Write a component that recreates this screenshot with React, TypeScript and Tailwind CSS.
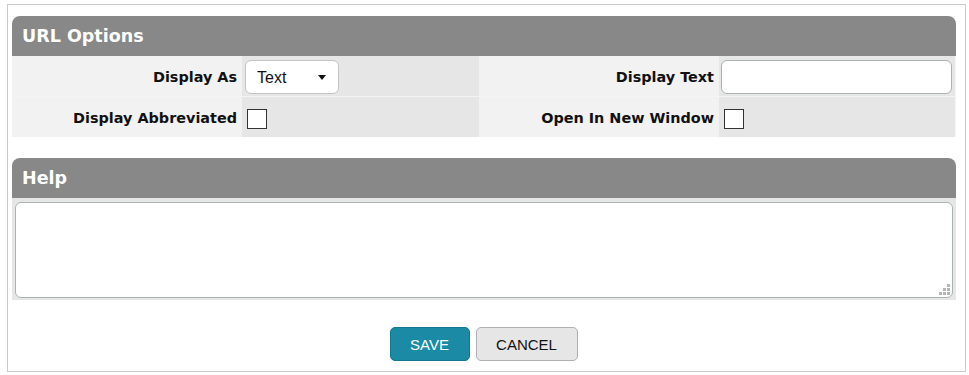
import React, { useState } from 'react';

const labelCls =
  "flex items-center justify-end pr-[5px] pt-[3px] bg-[#f2f2f2] text-[14.4px] font-bold text-[#111] [font-family:'DejaVu_Sans',Verdana,sans-serif]";
const valueCls = 'flex items-center bg-[#e6e6e6]';

const Checkbox: React.FC<{ checked: boolean; onToggle: () => void }> = ({ checked, onToggle }) => (
  <button
    type="button"
    onClick={onToggle}
    className="ml-[5px] mt-[3px] w-[20px] h-[20px] border border-[#333] bg-white flex items-center justify-center text-[12px] leading-none"
  >
    {checked ? '✓' : ''}
  </button>
);

const PanelHeader: React.FC<{ title: string }> = ({ title }) => (
  <div className="h-[40px] rounded-t-[8px] bg-[#888888] flex items-center px-[10px] text-white text-[17.5px] font-bold [font-family:'DejaVu_Sans',Verdana,sans-serif]">
    {title}
  </div>
);

const App: React.FC = () => {
  const [displayAs, setDisplayAs] = useState('Text');
  const [displayText, setDisplayText] = useState('');
  const [abbrev, setAbbrev] = useState(false);
  const [newWindow, setNewWindow] = useState(false);
  const [help, setHelp] = useState('');

  return (
    <div className="ml-[7px] mt-[4px] w-[959px] h-[368px] border border-[#cccccc] bg-white pl-[4px] pr-[9px] pt-[11px] [font-family:'Liberation_Sans',Arial,sans-serif]">
      {/* URL Options */}
      <div>
        <PanelHeader title="URL Options" />
        <div className="grid grid-cols-[230px_237px_240px_236px] gap-y-[1px] bg-[#f4f4f4]">
          <div className={`${labelCls} h-[40px]`}>Display As</div>
          <div className={`${valueCls} h-[40px] pl-[3px]`}>
            <div className="relative mt-[1px]">
              <select
                value={displayAs}
                onChange={(e) => setDisplayAs(e.target.value)}
                className="appearance-none w-[94px] h-[34px] rounded-[6px] border border-[#c4c4c4] bg-white pl-[11px] pt-[3px] text-[16px] text-[#111] outline-none"
              >
                <option>Text</option>
                <option>Link</option>
              </select>
              <svg className="absolute right-[13px] top-[15px] pointer-events-none" width="8" height="5" viewBox="0 0 8 5">
                <path d="M0 0 H8 L4 5 Z" fill="#111" />
              </svg>
            </div>
          </div>
          <div className={`${labelCls} h-[40px]`}>Display Text</div>
          <div className={`${valueCls} h-[40px] pl-[2px]`}>
            <input
              value={displayText}
              onChange={(e) => setDisplayText(e.target.value)}
              className="mt-[1px] w-[231px] h-[34px] rounded-[6px] border border-[#aab3b3] bg-white px-[6px] text-[15px] outline-none"
            />
          </div>

          <div className={`${labelCls} h-[40px]`}>Display Abbreviated</div>
          <div className={`${valueCls} h-[40px]`}>
            <Checkbox checked={abbrev} onToggle={() => setAbbrev(!abbrev)} />
          </div>
          <div className={`${labelCls} h-[40px]`}>Open In New Window</div>
          <div className={`${valueCls} h-[40px]`}>
            <Checkbox checked={newWindow} onToggle={() => setNewWindow(!newWindow)} />
          </div>
        </div>
      </div>

      {/* Help */}
      <div className="mt-[21px]">
        <PanelHeader title="Help" />
        <div className="bg-[#e6e6e6] pt-[4px] pb-[2px] px-[3px]">
          <div className="relative">
            <textarea
              value={help}
              onChange={(e) => setHelp(e.target.value)}
              className="block w-full h-[96px] resize-none rounded-[6px] border border-[#aab3b3] bg-white p-[6px] text-[14px] outline-none"
            />
            <svg className="absolute right-[3px] bottom-[3px] pointer-events-none" width="11" height="11" viewBox="0 0 11 11">
              <rect x="8" y="0" width="3" height="3" fill="#b5b5b5" />
              <rect x="4" y="4" width="3" height="3" fill="#b5b5b5" />
              <rect x="8" y="4" width="3" height="3" fill="#b5b5b5" />
              <rect x="0" y="8" width="3" height="3" fill="#b5b5b5" />
              <rect x="4" y="8" width="3" height="3" fill="#b5b5b5" />
              <rect x="8" y="8" width="3" height="3" fill="#b5b5b5" />
            </svg>
          </div>
        </div>
      </div>

      {/* Buttons */}
      <div className="mt-[27px] flex justify-center gap-[6px] pr-[1px]">
        <button
          type="button"
          className="w-[80px] h-[34px] pt-[2px] rounded-[5px] border border-[#14788f] bg-[#1a8aa5] text-white text-[15px]"
        >
          SAVE
        </button>
        <button
          type="button"
          className="w-[102px] h-[34px] pt-[2px] rounded-[5px] border border-[#b0b0b0] bg-[#e6e6e6] text-[#111] text-[15px]"
        >
          CANCEL
        </button>
      </div>
    </div>
  );
};

export default App;
